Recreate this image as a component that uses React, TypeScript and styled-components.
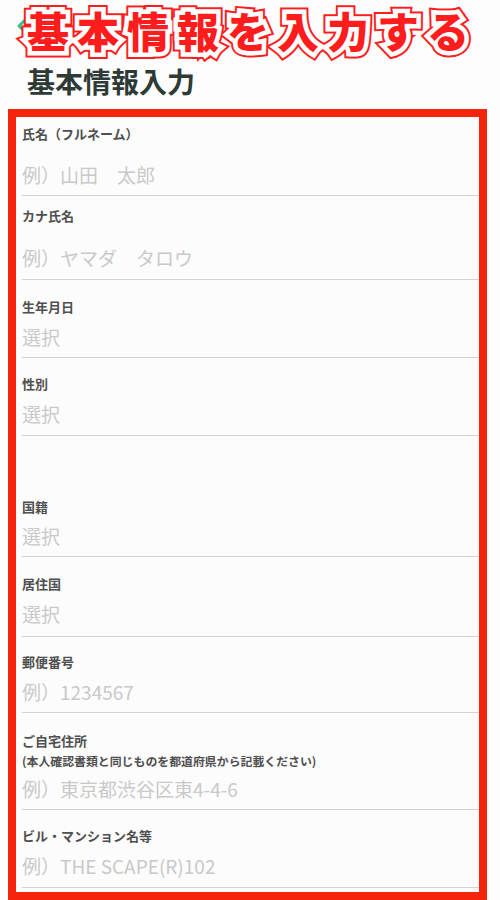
import React from "react";
import styled, { createGlobalStyle } from "styled-components";

const Global = createGlobalStyle`
  html, body { margin: 0; padding: 0; background: #fdfdfd; }
  body { font-family: "Noto Sans CJK JP", "Noto Sans", sans-serif; }
  * { box-sizing: border-box; }
`;

const Page = styled.div`
  width: 500px;
  height: 900px;
  overflow: hidden;
  display: flex;
  flex-direction: column;
  background: #fdfdfd;
`;

const Header = styled.div`
  position: relative;
  height: 52px;
  display: flex;
  align-items: center;
  justify-content: space-between;
  padding: 0 40px 0 15px;
`;

const Caption = styled.div`
  position: absolute;
  left: 27px;
  top: 7px;
  display: grid;
  pointer-events: none;
`;

const CaptionLayer = styled.span<{ $stroke: number; $color: string; $fill: string }>`
  grid-area: 1 / 1;
  font-family: "Noto Sans CJK JP", sans-serif;
  font-weight: 900;
  font-size: 42px;
  line-height: 46px;
  letter-spacing: 8px;
  white-space: nowrap;
  color: ${(p) => p.$fill};
  -webkit-text-stroke: ${(p) => p.$stroke}px ${(p) => p.$color};
  stroke-linejoin: round;
`;

const Title = styled.h1`
  margin: 13px 0 0 27px;
  font-size: 28px;
  line-height: 34px;
  font-weight: 700;
  color: #2e3a35;
  letter-spacing: 0;
`;

const Frame = styled.div`
  margin: 11px 0 0 8px;
  width: 479px;
  border: 8px solid #f5240c;
  background: #fcfcfc;
  padding: 0 0 4px 6px;
  display: flex;
  flex-direction: column;
`;

const Row = styled.div<{ $pt: number; $pb: number }>`
  display: flex;
  flex-direction: column;
  align-items: flex-start;
  padding: ${(p) => p.$pt}px 0 ${(p) => p.$pb}px 0;
  border-bottom: 1px solid #d2d2d2;
`;

const Label = styled.div`
  font-size: 13px;
  line-height: 16px;
  font-weight: 700;
  color: #4f4f4f;
`;

const Note = styled.div`
  margin-top: 5px;
  font-size: 11.9px;
  line-height: 13px;
  font-weight: 700;
  color: #4f4f4f;
  white-space: nowrap;
`;

const Placeholder = styled.div<{ $mt: number }>`
  margin-top: ${(p) => p.$mt}px;
  font-size: 19px;
  line-height: 24px;
  font-weight: 400;
  color: #c9c9c9;
  white-space: nowrap;
`;

type Field = { label: string; note?: string; ph: string; pt: number; gap: number; pb: number };

const fields: Field[] = [
  { label: "氏名（フルネーム）", ph: "例）山田　太郎", pt: 9, gap: 21, pb: 8 },
  { label: "カナ氏名", ph: "例）ヤマダ　タロウ", pt: 12, gap: 22, pb: 9 },
  { label: "生年月日", ph: "選択", pt: 19, gap: 10, pb: 8 },
  { label: "性別", ph: "選択", pt: 18, gap: 10, pb: 9 },
  { label: "国籍", ph: "選択", pt: 63, gap: 9, pb: 8 },
  { label: "居住国", ph: "選択", pt: 19, gap: 10, pb: 10 },
  { label: "郵便番号", ph: "例）1234567", pt: 17, gap: 10, pb: 8 },
  {
    label: "ご自宅住所",
    note: "(本人確認書類と同じものを都道府県から記載ください)",
    ph: "例）東京都渋谷区東4-4-6",
    pt: 20,
    gap: 10,
    pb: 8,
  },
  { label: "ビル・マンション名等", ph: "例）THE SCAPE(R)102", pt: 18, gap: 10, pb: 9 },
];

const captionText = "基本情報を入力する";

export default function App() {
  return (
    <>
      <Global />
      <Page>
        <Header>
          <svg width="16" height="22" viewBox="0 0 16 22">
            <path d="M12 3 L4 11 L12 19" fill="none" stroke="#3dbf96" strokeWidth="3" strokeLinecap="round" strokeLinejoin="round" />
          </svg>
          <svg width="22" height="22" viewBox="0 0 22 22">
            <path d="M4 4 L18 18 M18 4 L4 18" fill="none" stroke="#3dbf96" strokeWidth="3" strokeLinecap="round" />
          </svg>
          <Caption>
            <CaptionLayer $stroke={13} $color="#ff1c1c" $fill="#ff1c1c">{captionText}</CaptionLayer>
            <CaptionLayer $stroke={9} $color="#ffffff" $fill="#ffffff">{captionText}</CaptionLayer>
            <CaptionLayer $stroke={0} $color="transparent" $fill="#ff1c1c">{captionText}</CaptionLayer>
          </Caption>
        </Header>
        <Title>基本情報入力</Title>
        <Frame>
          {fields.map((f) => (
            <Row key={f.label} $pt={f.pt} $pb={f.pb}>
              <Label>{f.label}</Label>
              {f.note && <Note>{f.note}</Note>}
              <Placeholder $mt={f.gap}>{f.ph}</Placeholder>
            </Row>
          ))}
        </Frame>
      </Page>
    </>
  );
}
